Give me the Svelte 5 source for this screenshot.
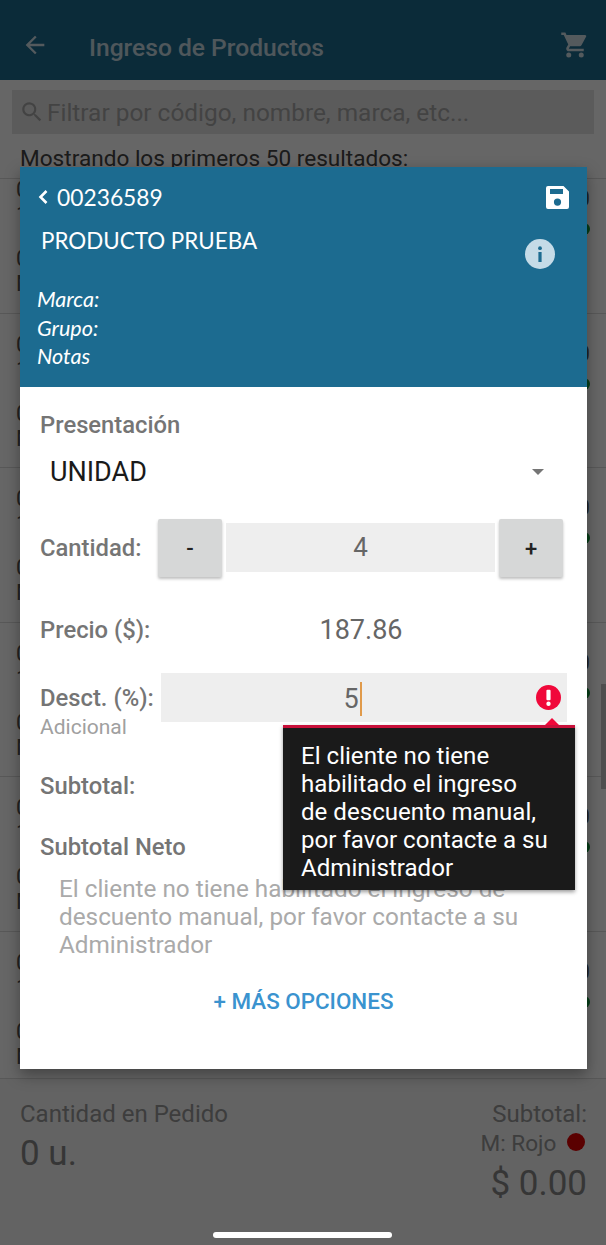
<script>
const rows = [0, 1, 2, 3, 4, 5];
</script>

<div class="screen">
    <header class="appbar">
        <svg class="back" viewBox="0 0 24 24" width="28" height="28"><path d="M20 11H7.8l5.6-5.6L12 4l-8 8 8 8 1.4-1.4L7.8 13H20z" fill="currentColor"/></svg>
        <span class="appbar-title">Ingreso de Productos</span>
        <svg class="cart" viewBox="0 0 24 24" width="30" height="30"><path d="M7 18a2 2 0 1 0 0 4 2 2 0 0 0 0-4zM1 2v2h2l3.6 7.6-1.4 2.4c-.7 1.3.3 3 1.8 3h12v-2H7.4a.25.25 0 0 1-.25-.25l.03-.12.9-1.63h7.45c.75 0 1.41-.41 1.75-1.03l3.58-6.49A1 1 0 0 0 20 4H5.2l-.9-2H1zm16 16a2 2 0 1 0 0 4 2 2 0 0 0 0-4z" fill="currentColor"/></svg>
    </header>

    <div class="search">
        <svg viewBox="0 0 24 24" width="26" height="26"><path d="M15.5 14h-.8l-.3-.3a6.5 6.5 0 1 0-.7.7l.3.3v.8l5 5 1.5-1.5-5-5zm-6 0a4.5 4.5 0 1 1 0-9 4.5 4.5 0 0 1 0 9z" fill="currentColor"/></svg>
        <span>Filtrar por código, nombre, marca, etc...</span>
    </div>
    <div class="showing">Mostrando los primeros 50 resultados:</div>

    <div class="list">
        {#each rows as row}
            <div class="row">
                <div class="row-left">
                    <div>00236589</div>
                    <div>1 PRODUCTO</div>
                    <div class="gap">0 u.</div>
                    <div>M: Rojo</div>
                </div>
                <div class="row-right">
                    <div class="price">0.00</div>
                    <span class="dot"></span>
                </div>
            </div>
        {/each}
    </div>

    <footer class="totals">
        <div>
            <div class="tot-label">Cantidad en Pedido</div>
            <div class="tot-big">0 u.</div>
        </div>
        <div class="tot-right">
            <div class="tot-label">Subtotal:</div>
            <div class="tot-mode">M: Rojo <span class="red-dot"></span></div>
            <div class="tot-big">$ 0.00</div>
        </div>
    </footer>

    <div class="scrim"></div>
    <div class="scroll-thumb"></div>
    <div class="home-bar"></div>

    <div class="modal">
        <div class="modal-head">
            <div class="code-row">
                <svg class="chev" viewBox="0 0 12 16" width="12" height="16"><path d="M9.5 2 3.5 8l6 6" fill="none" stroke="#fff" stroke-width="2.6"/></svg>
                <span>00236589</span>
                <svg class="save" viewBox="0 0 23 23" width="23" height="23"><path fill-rule="evenodd" d="M2 0h15.5L23 5.5V21a2 2 0 0 1-2 2H2a2 2 0 0 1-2-2V2a2 2 0 0 1 2-2zM4 3v5h13V3zM11.5 12.5a3.6 3.6 0 1 0 0 7.2 3.6 3.6 0 0 0 0-7.2z" fill="#fff"/></svg>
            </div>
            <div class="name-row">
                <span>PRODUCTO PRUEBA</span>
                <svg class="info" viewBox="0 0 30 30" width="30" height="30"><circle cx="15" cy="15" r="15" fill="#c5dbe7"/><rect x="13.4" y="13" width="3.2" height="10" fill="#1c6b90"/><circle cx="15" cy="9.2" r="1.9" fill="#1c6b90"/></svg>
            </div>
            <div class="meta">
                <div>Marca:</div>
                <div>Grupo:</div>
                <div>Notas</div>
            </div>
        </div>

        <div class="modal-body">
            <div class="label">Presentación</div>
            <div class="select">
                <span>UNIDAD</span>
                <i class="caret"></i>
            </div>

            <div class="qty-row">
                <span class="label qty-label">Cantidad:</span>
                <div class="btn">-</div>
                <div class="qty-input">4</div>
                <div class="btn">+</div>
            </div>

            <div class="price-row">
                <span class="label">Precio ($):</span>
                <span class="price-value">187.86</span>
            </div>

            <div class="disc-row">
                <div class="disc-label">
                    <div class="label">Desct. (%):</div>
                    <div class="extra">Adicional</div>
                </div>
                <div class="disc-input">
                    <span class="disc-value">5<i class="cursor"></i></span>
                    <svg class="alert" viewBox="0 0 24 24" width="25" height="25"><circle cx="12" cy="12" r="12" fill="#f0083a"/><rect x="10" y="4.6" width="4" height="10" rx="1" fill="#fff"/><circle cx="12" cy="18" r="2.1" fill="#fff"/></svg>
                </div>
            </div>

            <div class="label sub">Subtotal:</div>
            <div class="label neto">Subtotal Neto</div>
            <div class="note">El cliente no tiene habilitado el ingreso de descuento manual, por favor contacte a su Administrador</div>
            <div class="more">+ MÁS OPCIONES</div>

            <div class="tooltip">
                <i class="tip-arrow"></i>
                El cliente no tiene<br>habilitado el ingreso<br>de descuento manual,<br>por favor contacte a su<br>Administrador
            </div>
        </div>
    </div>
</div>

<style>
:global(body) {
    margin: 0;
    background: #fff;
}

.screen {
    position: relative;
    width: 606px;
    height: 1245px;
    overflow: hidden;
    display: flex;
    flex-direction: column;
    background: #fff;
    font-family: Roboto, sans-serif;
    color: #333;
}

.appbar {
    height: 80px;
    flex: none;
    box-sizing: border-box;
    padding: 10px 16px 0 21px;
    display: flex;
    align-items: center;
    background: #1c6b90;
    color: #fff;
}

.appbar-title {
    position: relative;
    top: 2px;
    margin-left: 40px;
    flex: 1;
    font-size: 24.6px;
    font-weight: 500;
    opacity: .75;
}

.back, .cart { opacity: .8; }

.search {
    flex: none;
    margin: 10px 12px 0;
    height: 44px;
    display: flex;
    align-items: center;
    gap: 2px;
    padding-left: 7px;
    background: #e4e4e4;
    color: #a8a8a8;
    font-size: 24.4px;
}

.showing {
    flex: none;
    margin: 10px 0 0 20px;
    height: 34px;
    line-height: 29px;
    font-size: 22.6px;
    color: #444;
}

.list {
    flex: 1;
    min-height: 0;
    overflow: hidden;
    border-top: 1px solid #ddd;
}

.row {
    height: 154.5px;
    box-sizing: border-box;
    border-bottom: 1px solid #ddd;
    display: flex;
    justify-content: space-between;
    padding: 0 0 0 16px;
    font-size: 22px;
    line-height: 25px;
    color: #555;
}

.row:first-child { margin-top: -20px; }

.row-left { padding-top: 18px; }
.gap { margin-top: 19px; }

.row-right {
    padding: 27px 16px 0 0;
    display: flex;
    flex-direction: column;
    align-items: flex-end;
}

.price { line-height: 26px; }

.dot {
    width: 12px;
    height: 12px;
    margin-top: 11px;
    border-radius: 50%;
    background: #0d9a3a;
}

.totals {
    flex: none;
    height: 167px;
    box-sizing: border-box;
    border-top: 1px solid #ddd;
    padding: 21px 19px 0 20px;
    display: flex;
    justify-content: space-between;
    background: #f7f7f7;
}

.tot-label {
    font-size: 24px;
    line-height: 28px;
    color: #999;
}

.tot-big {
    margin-top: 4px;
    font-size: 35px;
    line-height: 44px;
    color: #888;
}

.tot-right { text-align: right; }

.tot-right .tot-big { margin-top: 0; padding-top: 4px; }

.tot-mode {
    margin-top: 2px;
    margin-right: 2px;
    font-size: 22.6px;
    line-height: 28px;
    color: #999;
}

.red-dot {
    display: inline-block;
    width: 18px;
    height: 18px;
    margin-left: 5px;
    border-radius: 50%;
    background: #e00000;
}

.scrim {
    position: absolute;
    inset: 0;
    background: rgba(0, 0, 0, .6);
}

.scroll-thumb {
    position: absolute;
    right: 0;
    top: 684px;
    width: 5px;
    height: 105px;
    background: #4f4f4f;
}

.home-bar {
    position: absolute;
    left: 213px;
    bottom: 7px;
    width: 179px;
    height: 6px;
    border-radius: 3px;
    background: #fff;
}

.modal {
    position: absolute;
    left: 20px;
    top: 167px;
    width: 567px;
    height: 902px;
    display: flex;
    flex-direction: column;
    background: #fff;
    box-shadow: 0 6px 14px rgba(0, 0, 0, .35);
}

.modal-head {
    height: 220px;
    flex: none;
    box-sizing: border-box;
    padding: 14px 17px 0 17px;
    background: #1c6b90;
    color: #fff;
    font-family: Lato, sans-serif;
}

.code-row {
    display: flex;
    align-items: center;
    height: 32px;
    font-size: 22.8px;
}

.chev { margin-right: 8px; }
.code-row span { flex: 1; }
.save { margin-right: 1px; }

.name-row {
    display: flex;
    align-items: flex-start;
    justify-content: space-between;
    margin-top: 13px;
    padding: 0 1px 0 4px;
    height: 42px;
    font-size: 22.4px;
    line-height: 30px;
}

.info {
    margin: 13px 14px 0 0;
}

.meta {
    margin-top: 17px;
    font-size: 21.6px;
    font-style: italic;
    line-height: 28.5px;
}

.modal-body {
    position: relative;
    flex: 1;
    padding: 24px 20px 0 20px;
}

.label {
    font-size: 23.8px;
    line-height: 28px;
    font-weight: 500;
    color: #757575;
}

.select {
    display: flex;
    justify-content: space-between;
    align-items: center;
    margin-top: 17px;
    padding: 0 23px 0 10px;
    height: 32px;
    font-size: 27px;
    color: #1a1a1a;
}

.caret {
    border-left: 6px solid transparent;
    border-right: 6px solid transparent;
    border-top: 6px solid #757575;
}

.qty-row {
    display: flex;
    align-items: center;
    gap: 4px;
    margin-top: 31px;
    padding-right: 4px;
}

.qty-label {
    width: 114px;
    flex: none;
}

.btn {
    width: 64px;
    height: 58px;
    flex: none;
    display: flex;
    align-items: center;
    justify-content: center;
    border-radius: 2px;
    background: #d6d7d7;
    box-shadow: 0 2px 3px rgba(0, 0, 0, .25);
    color: #222;
    font-size: 22px;
    font-weight: 500;
}

.qty-input {
    flex: 1;
    height: 49px;
    margin-bottom: 2px;
    display: flex;
    align-items: center;
    justify-content: center;
    background: #eeeeee;
    color: #666;
    font-size: 26px;
}

.price-row {
    display: flex;
    align-items: center;
    margin-top: 37px;
    height: 32px;
}

.price-row .label {
    width: 121px;
}

.price-value {
    flex: 1;
    padding-right: 6px;
    text-align: center;
    font-size: 27px;
    color: #666;
}

.disc-row {
    display: flex;
    margin-top: 27px;
}

.disc-label {
    width: 121px;
    flex: none;
    padding-top: 11px;
}

.extra {
    margin-top: 3px;
    font-size: 21px;
    line-height: 24px;
    color: #a0a0a0;
}

.disc-input {
    position: relative;
    flex: 1;
    height: 49px;
    box-sizing: border-box;
    padding-right: 26px;
    display: flex;
    align-items: center;
    justify-content: center;
    background: #eeeeee;
}

.disc-value {
    position: relative;
    top: 1px;
    font-size: 27px;
    color: #666;
}

.cursor {
    position: absolute;
    left: 100%;
    top: -1px;
    width: 2px;
    height: 34px;
    margin-left: 1px;
    background: #e09a4a;
}

.alert {
    position: absolute;
    right: 6px;
    top: 12px;
}

.sub { margin-top: 33px; }
.neto { margin-top: 33px; }

.note {
    margin: 14px 40px 0 19px;
    font-size: 24.3px;
    line-height: 28px;
    color: #aaaaaa;
}

.more {
    margin-top: 28px;
    text-align: center;
    font-size: 22.4px;
    line-height: 28px;
    font-weight: 500;
    color: #3a93cf;
}

.tooltip {
    position: absolute;
    left: 263px;
    top: 338px;
    width: 292px;
    height: 165px;
    box-sizing: border-box;
    padding: 14px 0 0 18px;
    border-top: 3px solid #c8103a;
    background: #1a1a1a;
    box-shadow: 0 2px 4px rgba(0, 0, 0, .4);
    color: #fff;
    font-size: 24.1px;
    line-height: 28px;
}

.tip-arrow {
    position: absolute;
    right: 16px;
    top: -10px;
    border-left: 7px solid transparent;
    border-right: 7px solid transparent;
    border-bottom: 7px solid #f0083a;
}
</style>
